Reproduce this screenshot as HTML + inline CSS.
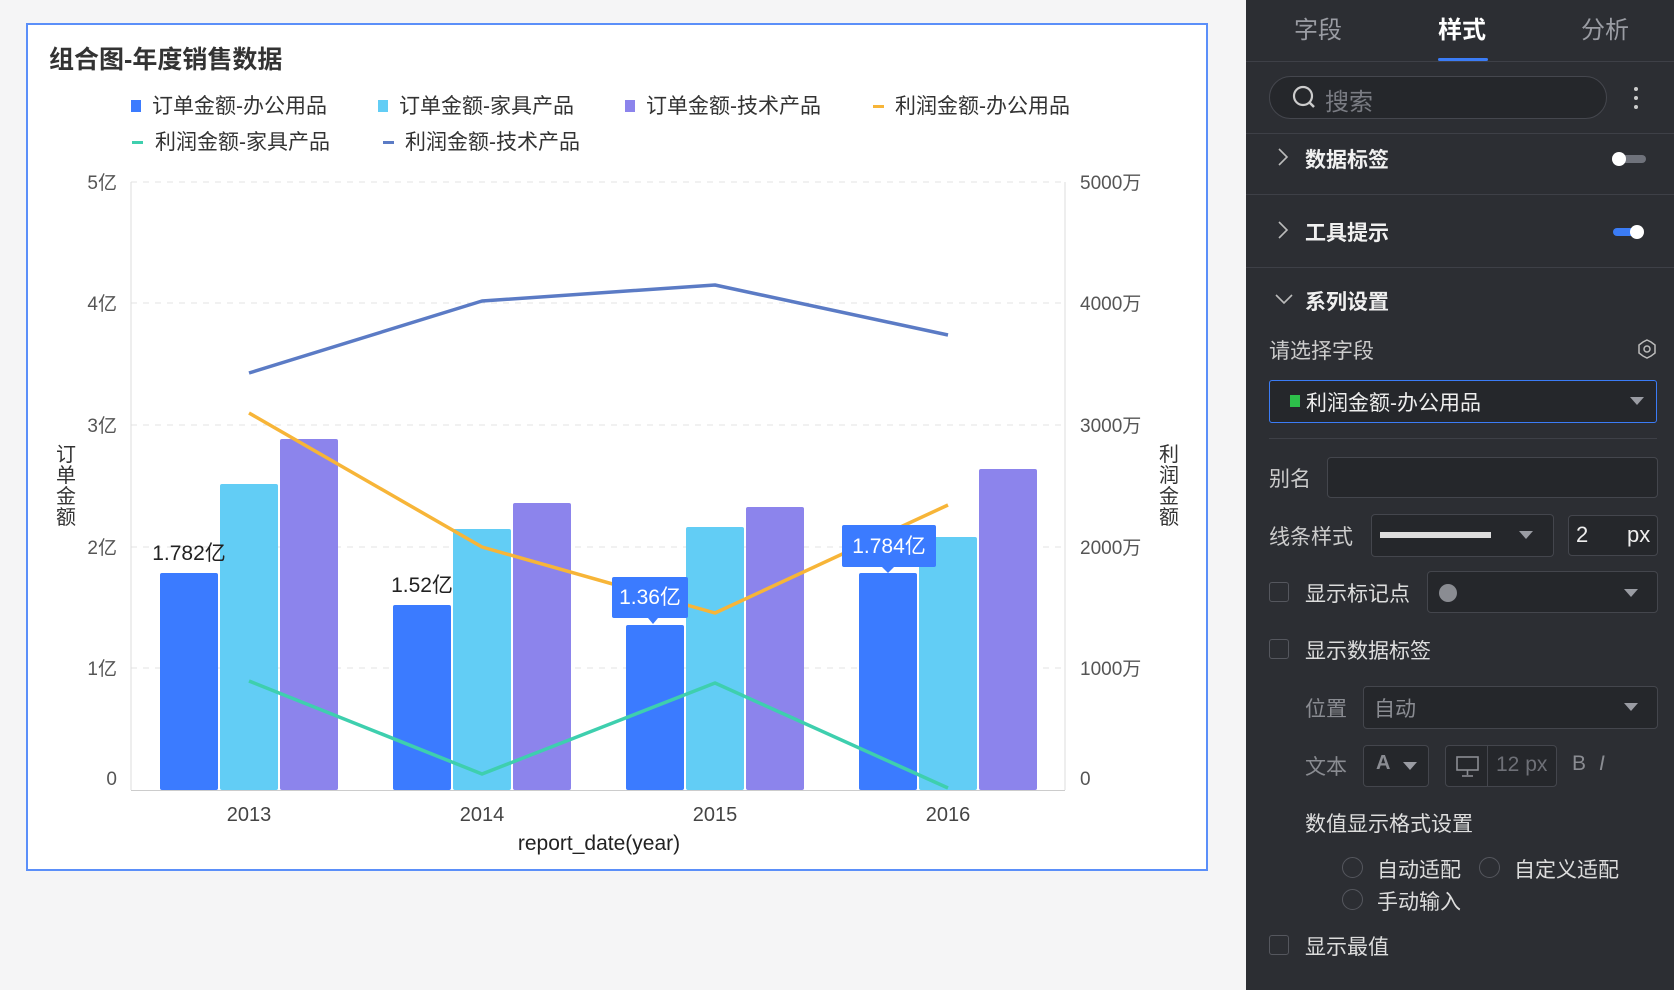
<!DOCTYPE html>
<html><head><meta charset="utf-8"><style>
*{margin:0;padding:0;box-sizing:border-box}
body{width:1674px;height:990px;background:#f5f5f6;font-family:"Liberation Sans","Noto Sans CJK SC",sans-serif;position:relative;overflow:hidden}
.card{position:absolute;left:26px;top:23px;width:1182px;height:848px;background:#fff;border:2px solid #5b8ff9}
.panel{position:absolute;left:1246px;top:0;width:428px;height:990px;background:#2c2e33;color:#d8d8d8}
.a{position:absolute;white-space:nowrap}
.div{position:absolute;left:0;width:428px;height:1px;background:#3e4047}
.box{position:absolute;border:1px solid #44464d;background:#25272b;border-radius:4px}
.cb{position:absolute;width:20px;height:20px;border:1px solid #55575e;border-radius:3px}
.rd{position:absolute;width:21px;height:21px;border:1px solid #55575e;border-radius:50%}
.tri{position:absolute;width:0;height:0;border-left:7px solid transparent;border-right:7px solid transparent;border-top:8px solid #9a9ca3}
.t{font-size:21px}
.h{font-size:21px;font-weight:bold;color:#f0f0f0}
</style></head><body>
<div class="card"></div>
<svg style="position:absolute;left:0;top:0" width="1246" height="990" font-family="Liberation Sans, Noto Sans CJK SC, sans-serif">
<text x="49" y="68" font-size="25" font-weight="bold" fill="#333">组合图-年度销售数据</text>
<g font-size="21" fill="#333">
<rect x="131" y="100" width="10" height="12" fill="#3b7bff"/><text x="152" y="113">订单金额-办公用品</text>
<rect x="378" y="100" width="10" height="12" fill="#62cdf5"/><text x="399" y="113">订单金额-家具产品</text>
<rect x="625" y="100" width="10" height="12" fill="#8c84ec"/><text x="646" y="113">订单金额-技术产品</text>
<rect x="873" y="105" width="11" height="3" fill="#f7b538"/><text x="895" y="113">利润金额-办公用品</text>
<rect x="132" y="141" width="11" height="3" fill="#3ecfae"/><text x="155" y="149">利润金额-家具产品</text>
<rect x="383" y="141" width="11" height="3" fill="#5b7bc5"/><text x="405" y="149">利润金额-技术产品</text>
</g>
<g stroke="#e3e3e3" stroke-dasharray="6,6" stroke-width="1">
<line x1="131" y1="182" x2="1065" y2="182"/><line x1="131" y1="303" x2="1065" y2="303"/><line x1="131" y1="425" x2="1065" y2="425"/><line x1="131" y1="547" x2="1065" y2="547"/><line x1="131" y1="668" x2="1065" y2="668"/>
</g>
<line x1="131" y1="182" x2="131" y2="790" stroke="#ddd"/>
<line x1="1065" y1="182" x2="1065" y2="790" stroke="#ddd"/>
<line x1="131" y1="790.5" x2="1065" y2="790.5" stroke="#ccc"/>
<g font-size="19" fill="#555" text-anchor="end">
<text x="117" y="189">5亿</text><text x="117" y="310">4亿</text><text x="117" y="432">3亿</text><text x="117" y="554">2亿</text><text x="117" y="675">1亿</text><text x="117" y="785">0</text>
</g>
<g font-size="19" fill="#555">
<text x="1080" y="189">5000万</text><text x="1080" y="310">4000万</text><text x="1080" y="432">3000万</text><text x="1080" y="554">2000万</text><text x="1080" y="675">1000万</text><text x="1080" y="785">0</text>
</g>
<g font-size="20" fill="#333" text-anchor="middle">
<text x="66" y="461">订</text><text x="66" y="482">单</text><text x="66" y="503">金</text><text x="66" y="524">额</text>
<text x="1169" y="461">利</text><text x="1169" y="482">润</text><text x="1169" y="503">金</text><text x="1169" y="524">额</text>
</g>
<g>
<rect x="160" y="573" width="58" height="217" fill="#3b7bff" rx="2"/>
<rect x="220" y="484" width="58" height="306" fill="#62cdf5" rx="2"/>
<rect x="280" y="439" width="58" height="351" fill="#8c84ec" rx="2"/>
<rect x="393" y="605" width="58" height="185" fill="#3b7bff" rx="2"/>
<rect x="453" y="529" width="58" height="261" fill="#62cdf5" rx="2"/>
<rect x="513" y="503" width="58" height="287" fill="#8c84ec" rx="2"/>
<rect x="626" y="625" width="58" height="165" fill="#3b7bff" rx="2"/>
<rect x="686" y="527" width="58" height="263" fill="#62cdf5" rx="2"/>
<rect x="746" y="507" width="58" height="283" fill="#8c84ec" rx="2"/>
<rect x="859" y="573" width="58" height="217" fill="#3b7bff" rx="2"/>
<rect x="919" y="537" width="58" height="253" fill="#62cdf5" rx="2"/>
<rect x="979" y="469" width="58" height="321" fill="#8c84ec" rx="2"/>
</g>
<g fill="none" stroke-width="3.5" stroke-linejoin="round">
<polyline points="249,373 482,301 715,285 948,335" stroke="#5b7bc5"/>
<polyline points="249,413 482,547 715,613 948,505" stroke="#f7b538"/>
<polyline points="249,681 482,774 715,683 948,788" stroke="#3ecfae"/>
</g>
<g font-size="21" fill="#222" text-anchor="middle">
<text x="189" y="560">1.782亿</text><text x="422" y="592">1.52亿</text>
</g>
<rect x="612" y="577" width="76" height="41" fill="#3b7bff" rx="2"/><polygon points="648,618 658,618 653,624" fill="#3b7bff"/>
<text x="650" y="604" font-size="21" fill="#fff" text-anchor="middle">1.36亿</text>
<rect x="842" y="525" width="94" height="42" fill="#3b7bff" rx="2"/><polygon points="882,567 894,567 888,573" fill="#3b7bff"/>
<text x="889" y="553" font-size="21" fill="#fff" text-anchor="middle">1.784亿</text>
<g font-size="20" fill="#444" text-anchor="middle">
<text x="249" y="821">2013</text><text x="482" y="821">2014</text><text x="715" y="821">2015</text><text x="948" y="821">2016</text>
<text x="599" y="850" fill="#222" font-size="21">report_date(year)</text>
</g>
</svg>

<div class="panel">
<div class="a" style="left:48px;top:10px;font-size:24px;color:#9a9ca3">字段</div>
<div class="a" style="left:192px;top:10px;font-size:24px;color:#fff;font-weight:bold">样式</div>
<div class="a" style="left:335px;top:10px;font-size:24px;color:#9a9ca3">分析</div>
<div class="a" style="left:192px;top:58px;width:50px;height:3px;background:#3b7cf6;border-radius:2px"></div>
<div class="div" style="top:61px"></div>
<div class="a" style="left:23px;top:76px;width:338px;height:43px;border:1px solid #45474e;border-radius:22px;background:#25272b"></div>
<svg class="a" style="left:45px;top:84px" width="26" height="26"><circle cx="12" cy="12" r="9" fill="none" stroke="#ccc" stroke-width="2.2"/><line x1="18.5" y1="18.5" x2="23" y2="23" stroke="#ccc" stroke-width="2.5"/></svg>
<div class="a" style="left:79px;top:82px;font-size:24px;color:#7a7c83">搜索</div>
<div class="a" style="left:388px;top:87px;width:4px;height:4px;border-radius:2px;background:#ccc"></div>
<div class="a" style="left:388px;top:96px;width:4px;height:4px;border-radius:2px;background:#ccc"></div>
<div class="a" style="left:388px;top:105px;width:4px;height:4px;border-radius:2px;background:#ccc"></div>
<div class="div" style="top:133px"></div>
<svg class="a" style="left:30px;top:147px" width="14" height="20"><polyline points="3,2 11,10 3,18" fill="none" stroke="#bbb" stroke-width="1.6"/></svg>
<div class="a h" style="left:59px;top:144px">数据标签</div>
<div class="a" style="left:368px;top:155px;width:32px;height:8px;border-radius:4px;background:#6f727b"></div>
<div class="a" style="left:366px;top:152px;width:14px;height:14px;border-radius:7px;background:#fff"></div>
<div class="div" style="top:194px"></div>
<svg class="a" style="left:30px;top:220px" width="14" height="20"><polyline points="3,2 11,10 3,18" fill="none" stroke="#bbb" stroke-width="1.6"/></svg>
<div class="a h" style="left:59px;top:217px">工具提示</div>
<div class="a" style="left:367px;top:228px;width:30px;height:8px;border-radius:4px;background:#3b7cf6"></div>
<div class="a" style="left:384px;top:225px;width:14px;height:14px;border-radius:7px;background:#fff"></div>
<div class="div" style="top:267px"></div>
<svg class="a" style="left:28px;top:292px" width="20" height="14"><polyline points="2,3 10,11 18,3" fill="none" stroke="#bbb" stroke-width="1.6"/></svg>
<div class="a h" style="left:59px;top:286px">系列设置</div>
<div class="a t" style="left:23px;top:335px;color:#ccc">请选择字段</div>
<svg class="a" style="left:391px;top:339px" width="20" height="20"><circle cx="10" cy="10" r="3" fill="none" stroke="#bbb" stroke-width="1.5"/><polygon points="10,1 14,3 18,6 18,14 14,17 10,19 6,17 2,14 2,6 6,3" fill="none" stroke="#bbb" stroke-width="1.5"/></svg>
<div class="a" style="left:23px;top:380px;width:388px;height:43px;border:1px solid #3b7cf6;border-radius:3px;background:#25272b"></div>
<div class="a" style="left:44px;top:395px;width:10px;height:12px;background:#2dbf4a"></div>
<div class="a t" style="left:60px;top:387px;color:#eee">利润金额-办公用品</div>
<div class="tri" style="left:384px;top:397px"></div>
<div class="div" style="top:438px;left:23px;width:388px"></div>
<div class="a t" style="left:23px;top:463px;color:#ccc">别名</div>
<div class="box" style="left:81px;top:457px;width:331px;height:41px"></div>
<div class="a t" style="left:23px;top:521px;color:#ccc">线条样式</div>
<div class="box" style="left:125px;top:514px;width:183px;height:43px"></div>
<div class="a" style="left:134px;top:532px;width:111px;height:6px;background:#ddd"></div>
<div class="tri" style="left:273px;top:531px"></div>
<div class="box" style="left:322px;top:515px;width:90px;height:41px"></div>
<div class="a t" style="left:330px;top:522px;color:#eee;font-size:22px">2</div>
<div class="a t" style="left:381px;top:522px;color:#eee;font-size:22px">px</div>
<div class="cb" style="left:23px;top:582px"></div>
<div class="a t" style="left:59px;top:578px;color:#ddd">显示标记点</div>
<div class="box" style="left:181px;top:571px;width:231px;height:42px"></div>
<div class="a" style="left:193px;top:584px;width:18px;height:18px;border-radius:9px;background:#8a8c92"></div>
<div class="tri" style="left:378px;top:589px"></div>
<div class="cb" style="left:23px;top:639px"></div>
<div class="a t" style="left:59px;top:635px;color:#ddd">显示数据标签</div>
<div class="a t" style="left:59px;top:693px;color:#8a8c92">位置</div>
<div class="box" style="left:117px;top:686px;width:295px;height:43px"></div>
<div class="a t" style="left:128px;top:693px;color:#8a8c92">自动</div>
<div class="tri" style="left:378px;top:703px"></div>
<div class="a t" style="left:59px;top:751px;color:#8a8c92">文本</div>
<div class="box" style="left:117px;top:745px;width:66px;height:42px"></div>
<div class="a" style="left:130px;top:752px;font-size:20px;font-weight:bold;color:#8a8c92">A</div>
<div class="tri" style="left:157px;top:762px"></div>
<div class="box" style="left:199px;top:745px;width:112px;height:42px"></div>
<div class="a" style="left:241px;top:746px;width:1px;height:40px;background:#44464d"></div>
<svg class="a" style="left:209px;top:755px" width="26" height="24"><rect x="2" y="2" width="21" height="13" fill="none" stroke="#8a8c92" stroke-width="1.6"/><line x1="12.5" y1="15" x2="12.5" y2="20" stroke="#8a8c92" stroke-width="1.6"/><line x1="7" y1="21" x2="18" y2="21" stroke="#8a8c92" stroke-width="1.6"/></svg>
<div class="a" style="left:250px;top:753px;font-size:21px;color:#6e7077">12 px</div>
<div class="a" style="left:326px;top:752px;font-size:21px;color:#8a8c92">B</div>
<div class="a" style="left:353px;top:752px;font-size:21px;color:#8a8c92;font-style:italic">I</div>
<div class="a t" style="left:59px;top:808px;color:#ddd">数值显示格式设置</div>
<div class="rd" style="left:96px;top:857px"></div>
<div class="a t" style="left:131px;top:854px;color:#ddd">自动适配</div>
<div class="rd" style="left:233px;top:857px"></div>
<div class="a t" style="left:268px;top:854px;color:#ddd">自定义适配</div>
<div class="rd" style="left:96px;top:889px"></div>
<div class="a t" style="left:131px;top:886px;color:#ddd">手动输入</div>
<div class="cb" style="left:23px;top:935px"></div>
<div class="a t" style="left:59px;top:931px;color:#ddd">显示最值</div>
</div>
</body></html>
